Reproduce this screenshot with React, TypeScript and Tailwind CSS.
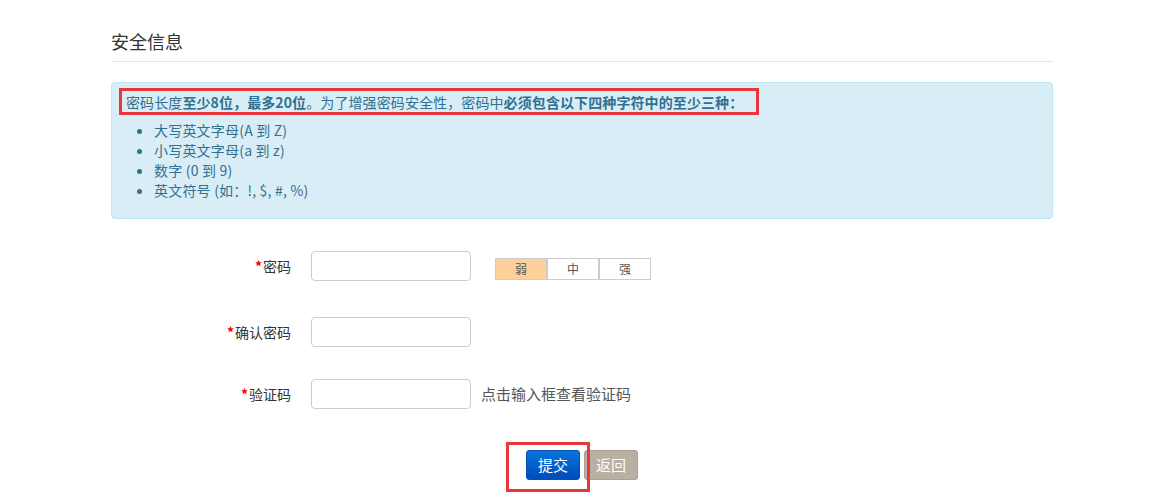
import React from 'react'

const rules = [
  '大写英文字母(A 到 Z)',
  '小写英文字母(a 到 z)',
  '数字 (0 到 9)',
  '英文符号 (如：!, $, #, %)',
]

function FormRow({ label, children, className = '' }: { label: string; children?: React.ReactNode; className?: string }) {
  return (
    <div className={`flex items-start ${className}`}>
      <label className="w-[180px] h-[30px] flex items-center justify-end text-[14px] text-[#333]">
        <span className="text-[#e00] font-bold mr-px">*</span>
        {label}
      </label>
      <input type="text" className="ml-[20px] w-[160px] h-[30px] border border-[#ccc] rounded-[4px] bg-white px-2 outline-none" />
      {children}
    </div>
  )
}

export default function App() {
  return (
    <div className="min-h-[503px] bg-white font-['Noto_Sans_CJK_SC','Liberation_Sans',sans-serif]">
      <div className="mx-auto w-[942px] pt-[30px]">
        {/* Title */}
        <h2 className="text-[18px] leading-[22px] text-[#333] pb-[9px] border-b border-[#e5e5e5]">安全信息</h2>

        {/* Password rules */}
        <div className="mt-[20px] bg-[#d9edf7] border border-[#bce8f1] rounded-[4px] text-[#31708f] text-[14px] leading-[20px] pl-[14px] pt-[9px] pb-[18px]">
          <p className="relative inline-block tracking-[0.1px]">
            密码长度<b>至少8位，最多20位</b>。为了增强密码安全性，密码中<b>必须包含以下四种字符中的至少三种：</b>
            <span className="absolute -left-[7px] -right-[16px] -top-[4px] -bottom-[3px] border-[3px] border-[#e8383d]" />
          </p>
          <ul className="mt-[8px] list-disc pl-[28px] marker:text-[#31708f]">
            {rules.map((r) => (
              <li key={r} className="font-normal tracking-[0.2px]">{r}</li>
            ))}
          </ul>
        </div>

        {/* Form */}
        <div className="mt-[32px]">
          <FormRow label="密码">
            <div className="ml-[24px] mt-[7px] flex text-[12px] text-[#555]">
              <div className="w-[52px] h-[22px] flex items-center justify-center border border-[#ccc] bg-[#fdd19c]">弱</div>
              <div className="w-[52px] h-[22px] flex items-center justify-center border border-[#ccc] bg-white">中</div>
              <div className="w-[52px] h-[22px] flex items-center justify-center border border-[#ccc] bg-white">强</div>
            </div>
          </FormRow>
          <FormRow label="确认密码" className="mt-[36px]" />
          <FormRow label="验证码" className="mt-[32px]">
            <span className="ml-[10px] h-[30px] flex items-center text-[15px] text-[#555]">点击输入框查看验证码</span>
          </FormRow>

          {/* Actions */}
          <div className="mt-[41px] flex justify-center gap-[4px]">
            <div className="relative">
              <button className="w-[54px] h-[30px] rounded-[3px] border border-[#0a4fb0] bg-gradient-to-b from-[#0b73dc] to-[#004cbb] text-white text-[15px]">提交</button>
              <span className="absolute -left-[20px] -right-[10px] -top-[8px] -bottom-[12px] border-[3px] border-[#e8383d]" />
            </div>
            <button className="w-[54px] h-[30px] rounded-[3px] border border-[#aaa195] bg-[#b9b0a3] text-white text-[15px]">返回</button>
          </div>
        </div>
      </div>
    </div>
  )
}
